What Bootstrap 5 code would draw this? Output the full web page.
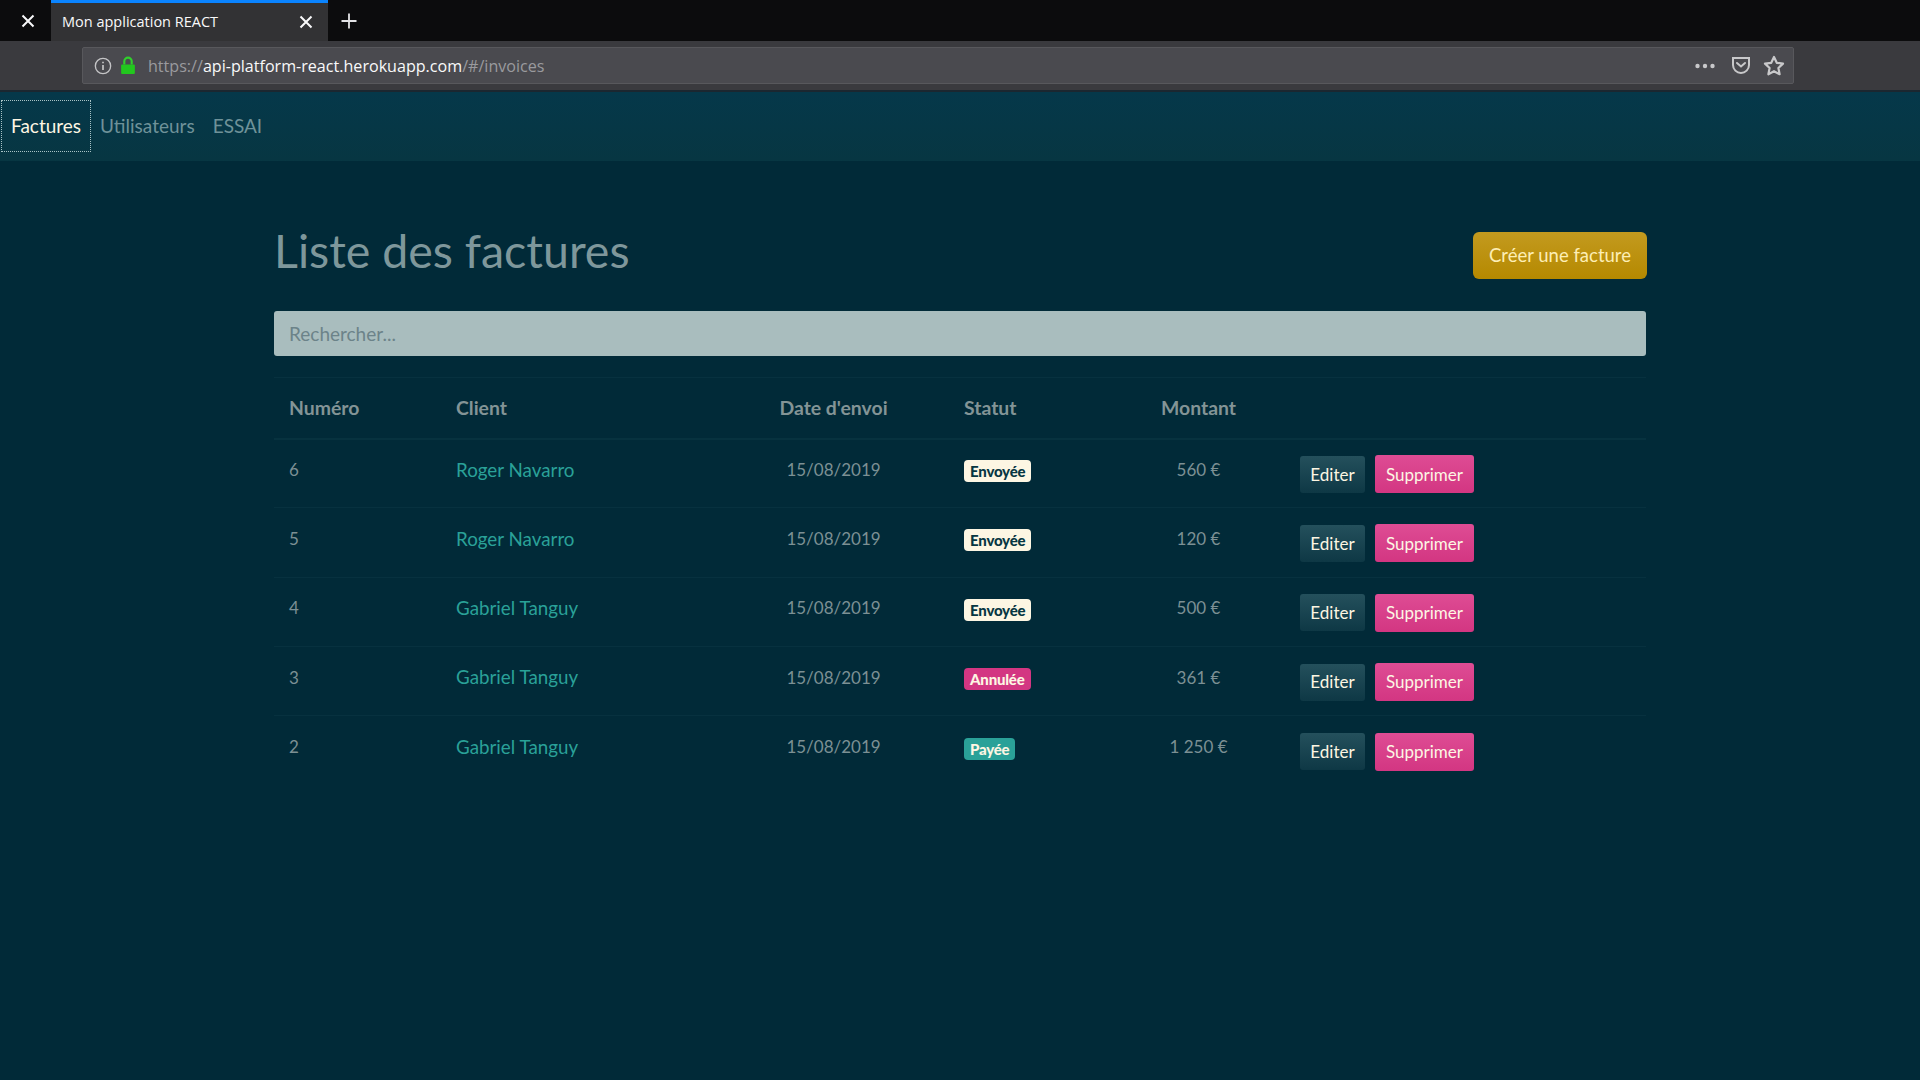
<!DOCTYPE html>
<html lang="fr">
<head>
    <meta charset="utf-8">
    <title>Mon application REACT</title>
    <link rel="stylesheet" href="https://cdn.jsdelivr.net/npm/bootstrap@5.3.0/dist/css/bootstrap.min.css">
    <style>
        body {
            background-color: #012a38;
            font-family: "Lato", "Noto Sans", sans-serif;
            font-size: 18px;
            color: #839496;
            min-height: 1080px;
        }
        .tab-strip {
            height: 41px;
            background-color: #0c0c0d;
            color: #f9f9fa;
        }
        .close-slot {
            width: 51px;
            padding-left: 5px;
        }
        .tab-active {
            width: 277px;
            background-color: #323234;
            border-top: 3px solid #0a84ff;
            padding: 0 15px 0 11px;
            font-family: "Open Sans", sans-serif;
            font-size: 14.5px;
        }
        .plus-slot {
            width: 42px;
        }
        .browser-toolbar {
            height: 51px;
            background-color: #3a3a3e;
            border-bottom: 2px solid #1b2730;
            padding: 6px 0 6px 82px;
        }
        .url-field {
            width: 1712px;
            height: 37px;
            background-color: #4a4a4f;
            border: 1px solid #58585c;
            border-radius: 2px;
            padding: 0 8px 0 11px;
            font-family: "Open Sans", sans-serif;
            font-size: 16.1px;
            color: #9a9a9e;
        }
        .url-host {
            color: #f9f9fa;
        }
        .url-text {
            margin-left: 12px;
            position: relative;
            top: 1px;
        }
        .toolbar-icons {
            gap: 12px;
        }
        .top-nav {
            height: 69px;
            background-color: #06364a;
            background-image: linear-gradient(#05384a, #073642);
            padding: 8px 0 8px 1px;
            font-size: 19px;
        }
        .top-nav .nav-link {
            color: #6f9299;
            padding: 1px 9px 0;
            height: 52px;
            display: flex;
            align-items: center;
        }
        .top-nav .nav-link.active {
            color: #fdf6e3;
            border: 1px dotted #a9c3c6;
        }
        .page-wrap {
            width: 1372px;
            margin-left: 274px;
        }
        .title-row {
            padding-top: 71px;
        }
        .page-title {
            font-size: 46.5px;
            font-weight: 400;
            color: #7e979b;
            margin: 0;
            line-height: 36px;
        }
        .btn-create {
            width: 174px;
            height: 47px;
            margin-right: -1px;
            background-image: linear-gradient(#c39a1f, #b58900);
            color: #fdeeb5;
            border: 0;
            font-size: 18.5px;
            padding: 0;
        }
        .search-input.form-control {
            height: 45px;
            margin-top: 32px;
            background-color: #a9bdbe;
            border: 0;
            border-radius: 3px;
            font-size: 19px;
            padding: 0 15px;
        }
        .search-input::placeholder {
            color: #6c8389;
        }
        .invoice-table {
            table-layout: fixed;
            margin-top: 21px;
            margin-bottom: 0;
            --bs-table-bg: transparent;
            --bs-table-color: #839496;
            --bs-table-border-color: #07313f;
            border-top: 1px solid #07313f;
            color: #7c9094;
        }
        .invoice-table th {
            font-size: 19.4px;
            font-weight: 700;
            height: 61px;
            padding: 0 14px 0 15px;
            vertical-align: middle;
            color: #839496;
            border-bottom: 2px solid #07323f;
        }
        .invoice-table td {
            height: 69.3px;
            padding: 0 14px 7px 15px;
            vertical-align: middle;
        }
        .invoice-table tr:last-child td {
            border-bottom: 0;
        }
        .col-num { width: 167px; }
        .col-client { width: 276px; }
        .col-date { width: 232px; }
        .col-status { width: 162px; }
        .col-amount { width: 174px; }
        .cell-figure {
            font-size: 17px;
        }
        .client-link {
            font-size: 18.8px;
            color: #2aa198;
            text-decoration: none;
        }
        .status-chip {
            font-size: 15px;
            font-weight: 900;
            padding: 3px 6px;
            line-height: 16px;
            border-radius: 4px;
            letter-spacing: -0.2px;
            position: relative;
            top: 1px;
        }
        .chip-sent {
            background-color: #fdf6e3;
            color: #073642;
        }
        .chip-cancelled {
            background-color: #d33682;
            color: #fdf6e3;
        }
        .chip-paid {
            background-color: #2aa198;
            color: #fdf6e3;
        }
        .action-group {
            position: relative;
            top: 4.5px;
            gap: 10px;
        }
        .btn-edit, .btn-remove {
            font-size: 17px;
            padding: 0;
            border: 0;
            border-radius: 3px;
            color: #fdf6e3;
        }
        .btn-edit {
            width: 65px;
            height: 37px;
            background-image: linear-gradient(#24505c, #0e3845);
        }
        .btn-remove {
            width: 99px;
            height: 38px;
            background-image: linear-gradient(#de4c94, #d33682);
        }
    </style>
</head>
<body>
    <div class="tab-strip d-flex align-items-stretch">
        <div class="close-slot d-flex align-items-center justify-content-center">
            <svg width="14" height="14" viewBox="0 0 14 14" fill="none" stroke="#f9f9fa" stroke-width="2"><path d="M1.5 1.5l11 11M12.5 1.5l-11 11"/></svg>
        </div>
        <div class="tab-active d-flex align-items-center justify-content-between">
            <span>Mon application REACT</span>
            <svg width="14" height="14" viewBox="0 0 14 14" fill="none" stroke="#f9f9fa" stroke-width="2"><path d="M1.5 1.5l11 11M12.5 1.5l-11 11"/></svg>
        </div>
        <div class="plus-slot d-flex align-items-center justify-content-center">
            <svg width="16" height="16" viewBox="0 0 16 16" fill="none" stroke="#e4e4e6" stroke-width="1.8"><path d="M8 0.5v15M0.5 8h15"/></svg>
        </div>
    </div>
    <div class="browser-toolbar">
        <div class="url-field d-flex align-items-center">
            <svg class="me-2" width="18" height="18" viewBox="0 0 16 16" fill="none" stroke="#c4c4c6" stroke-width="1.2"><circle cx="8" cy="8" r="6.8"/><path d="M8 7v4.6M8 4.2v1.4" stroke-width="1.5"/></svg>
            <svg width="16" height="19" viewBox="0 0 15 18"><path d="M4 8V5a3.500 3.500 0 0 1 7 0v3" fill="none" stroke="#30d02c" stroke-width="2"/><rect x="1" y="8" width="13" height="9" rx="1" fill="#22c71e"/></svg>
            <span class="url-text">https://<span class="url-host">api-platform-react.herokuapp.com</span>/#/invoices</span>
            <div class="toolbar-icons ms-auto d-flex align-items-center">
                <svg class="me-1" width="20" height="6" viewBox="0 0 20 6" fill="#c8c8ca"><circle cx="2.500" cy="3" r="2.200"/><circle cx="10" cy="3" r="2.200"/><circle cx="17.500" cy="3" r="2.200"/></svg>
                <svg width="20" height="19" viewBox="0 0 20 19" fill="none" stroke="#c8c8ca" stroke-width="2"><path d="M2 2h16v7a8 8 0 0 1-16 0z"/><path d="M6 7l4 3.500L14 7" stroke-linecap="round"/></svg>
                <svg width="22" height="22" viewBox="0 0 20 20" fill="none" stroke="#c8c8ca" stroke-width="2" stroke-linejoin="round"><path d="M10 1.800l2.500 5.300 5.700.7-4.200 4 1.100 5.700-5.100-2.800-5.100 2.800 1.100-5.700-4.200-4 5.700-.7z"/></svg>
            </div>
        </div>
    </div>
    <nav class="top-nav">
        <ul class="nav">
            <li class="nav-item"><a class="nav-link active" href="#">Factures</a></li>
            <li class="nav-item"><a class="nav-link" href="#">Utilisateurs</a></li>
            <li class="nav-item"><a class="nav-link" href="#">ESSAI</a></li>
        </ul>
    </nav>
    <main class="page-wrap">
        <div class="title-row d-flex justify-content-between align-items-start">
            <h1 class="page-title">Liste des factures</h1>
            <a href="#" class="btn btn-create d-flex align-items-center justify-content-center">Créer une facture</a>
        </div>
        <input type="text" class="form-control search-input" placeholder="Rechercher...">
        <table class="table invoice-table">
            <colgroup>
                <col class="col-num"><col class="col-client"><col class="col-date"><col class="col-status"><col class="col-amount"><col>
            </colgroup>
            <thead>
                <tr>
                    <th>Numéro</th>
                    <th>Client</th>
                    <th class="text-center">Date d'envoi</th>
                    <th>Statut</th>
                    <th class="text-center">Montant</th>
                    <th></th>
                </tr>
            </thead>
            <tbody>
                <tr>
                    <td class="cell-figure">6</td>
                    <td><a class="client-link" href="#">Roger Navarro</a></td>
                    <td class="text-center cell-figure">15/08/2019</td>
                    <td><span class="badge status-chip chip-sent">Envoyée</span></td>
                    <td class="text-center cell-figure">560 €</td>
                    <td><div class="action-group d-flex align-items-center"><button class="btn btn-edit">Editer</button><button class="btn btn-remove">Supprimer</button></div></td>
                </tr>
                <tr>
                    <td class="cell-figure">5</td>
                    <td><a class="client-link" href="#">Roger Navarro</a></td>
                    <td class="text-center cell-figure">15/08/2019</td>
                    <td><span class="badge status-chip chip-sent">Envoyée</span></td>
                    <td class="text-center cell-figure">120 €</td>
                    <td><div class="action-group d-flex align-items-center"><button class="btn btn-edit">Editer</button><button class="btn btn-remove">Supprimer</button></div></td>
                </tr>
                <tr>
                    <td class="cell-figure">4</td>
                    <td><a class="client-link" href="#">Gabriel Tanguy</a></td>
                    <td class="text-center cell-figure">15/08/2019</td>
                    <td><span class="badge status-chip chip-sent">Envoyée</span></td>
                    <td class="text-center cell-figure">500 €</td>
                    <td><div class="action-group d-flex align-items-center"><button class="btn btn-edit">Editer</button><button class="btn btn-remove">Supprimer</button></div></td>
                </tr>
                <tr>
                    <td class="cell-figure">3</td>
                    <td><a class="client-link" href="#">Gabriel Tanguy</a></td>
                    <td class="text-center cell-figure">15/08/2019</td>
                    <td><span class="badge status-chip chip-cancelled">Annulée</span></td>
                    <td class="text-center cell-figure">361 €</td>
                    <td><div class="action-group d-flex align-items-center"><button class="btn btn-edit">Editer</button><button class="btn btn-remove">Supprimer</button></div></td>
                </tr>
                <tr>
                    <td class="cell-figure">2</td>
                    <td><a class="client-link" href="#">Gabriel Tanguy</a></td>
                    <td class="text-center cell-figure">15/08/2019</td>
                    <td><span class="badge status-chip chip-paid">Payée</span></td>
                    <td class="text-center cell-figure">1 250 €</td>
                    <td><div class="action-group d-flex align-items-center"><button class="btn btn-edit">Editer</button><button class="btn btn-remove">Supprimer</button></div></td>
                </tr>
            </tbody>
        </table>
    </main>
    <script src="https://cdn.jsdelivr.net/npm/bootstrap@5.3.0/dist/js/bootstrap.bundle.min.js"></script>
</body>
</html>
